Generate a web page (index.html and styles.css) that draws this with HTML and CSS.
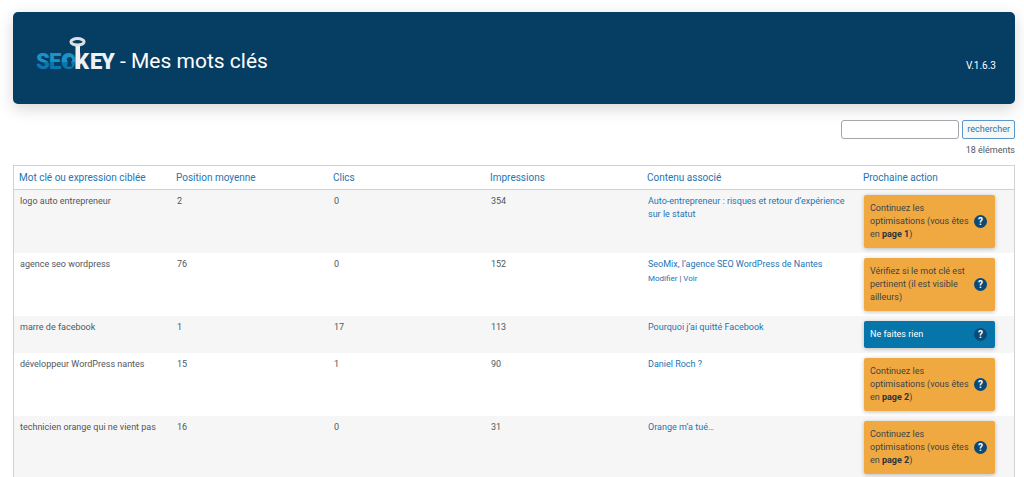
FILE: index.html
```html
<!DOCTYPE html>
<html lang="fr">
<head>
<meta charset="utf-8">
<meta name="viewport" content="width=device-width, initial-scale=1">
<title>SEOKEY - Mes mots clés</title>
<link rel="stylesheet" href="styles.css">
</head>
<body>
<header class="banner">
  <h1 class="banner-title">
    <svg class="logo" viewBox="0 0 80 36" role="img" aria-label="SEOKEY">
      <defs>
        <linearGradient id="duo" gradientUnits="userSpaceOnUse" x1="0" y1="16" x2="0" y2="33">
          <stop offset="0.55" stop-color="#1c93c8"/>
          <stop offset="0.55" stop-color="#0a78ae"/>
        </linearGradient>
      </defs>
      <g class="logo-letters">
        <g fill="url(#duo)" stroke="url(#duo)"><text x="0" y="32">S</text><text x="13" y="32">E</text><text x="25" y="32">O</text></g>
        <ellipse cx="33" cy="24.500" rx="5" ry="6" fill="url(#duo)"/>
        <path d="M33.500 20a2.700 2.700 0 0 1 1.600 4.900l1 4.600h-5.200l1-4.600a2.700 2.700 0 0 1 1.600-4.900z" fill="#063d63" stroke="none"/>
        <g fill="#f0f1f3" stroke="#f0f1f3"><text x="39" y="32">K</text><text x="54" y="32">E</text><text x="65" y="32">Y</text></g>
      </g>
      <path d="M39.500 7h4.500v25h-4.500z" fill="#f0f1f3"/>
      <ellipse cx="41.500" cy="4.800" rx="6.600" ry="3.200" fill="none" stroke="#dcdfe3" stroke-width="3"/>
    </svg>
    <span>- Mes mots clés</span>
  </h1>
  <span class="version">V.1.6.3</span>
</header>
<main class="content">
  <form class="search">
    <input class="search-field" type="search" aria-label="Rechercher un mot clé">
    <button class="search-button" type="button">rechercher</button>
  </form>
  <p class="count">18 éléments</p>
  <table class="keywords">
    <colgroup><col class="col-s"><col class="col-s"><col class="col-s"><col class="col-s"><col class="col-l"><col></colgroup>
    <thead>
      <tr>
        <th scope="col"><a href="#">Mot clé ou expression ciblée</a></th>
        <th scope="col"><a href="#">Position moyenne</a></th>
        <th scope="col"><a href="#">Clics</a></th>
        <th scope="col"><a href="#">Impressions</a></th>
        <th scope="col"><a href="#">Contenu associé</a></th>
        <th scope="col"><a href="#">Prochaine action</a></th>
      </tr>
    </thead>
    <tbody>
      <tr>
        <td>logo auto entrepreneur</td><td>2</td><td>0</td><td>354</td>
        <td><a href="#">Auto-entrepreneur : risques et retour d’expérience sur le statut</a></td>
        <td><div class="action"><span>Continuez les optimisations (vous êtes en <b>page 1</b>)</span><button class="help" type="button" aria-label="Aide">?</button></div></td>
      </tr>
      <tr>
        <td>agence seo wordpress</td><td>76</td><td>0</td><td>152</td>
        <td><a href="#">SeoMix, l’agence SEO WordPress de Nantes</a>
          <div class="row-links"><a href="#">Modifier</a> | <a href="#">Voir</a></div></td>
        <td><div class="action"><span>Vérifiez si le mot clé est pertinent (il est visible ailleurs)</span><button class="help" type="button" aria-label="Aide">?</button></div></td>
      </tr>
      <tr>
        <td>marre de facebook</td><td>1</td><td>17</td><td>113</td>
        <td><a href="#">Pourquoi j’ai quitté Facebook</a></td>
        <td><div class="action action-done"><span>Ne faites rien</span><button class="help" type="button" aria-label="Aide">?</button></div></td>
      </tr>
      <tr>
        <td>développeur WordPress nantes</td><td>15</td><td>1</td><td>90</td>
        <td><a href="#">Daniel Roch ?</a></td>
        <td><div class="action"><span>Continuez les optimisations (vous êtes en <b>page 2</b>)</span><button class="help" type="button" aria-label="Aide">?</button></div></td>
      </tr>
      <tr>
        <td>technicien orange qui ne vient pas</td><td>16</td><td>0</td><td>31</td>
        <td><a href="#">Orange m’a tué…</a></td>
        <td><div class="action"><span>Continuez les optimisations (vous êtes en <b>page 2</b>)</span><button class="help" type="button" aria-label="Aide">?</button></div></td>
      </tr>
    </tbody>
  </table>
</main>
</body>
</html>
```
FILE: styles.css
```css
* { box-sizing: border-box; }
body {
  margin: 0;
  padding: 12px 9px 0 13px;
  background: #fff;
  color: #50575e;
  font: 9px/13px Roboto, sans-serif;
}
a { color: #2574b3; text-decoration: none; }
.banner {
  display: flex;
  align-items: center;
  justify-content: space-between;
  padding: 25px 19px 31px 23px;
  border-radius: 5px;
  background: #063d63;
  color: #fff;
  box-shadow: 0 5px 16px rgba(0, 0, 0, 0.16);
}
.banner-title {
  display: flex;
  align-items: flex-end;
  gap: 4px;
  margin: 0;
  font-size: 21px;
  font-weight: 400;
  line-height: 24px;
}
.logo { width: 80px; height: 36px; overflow: visible; }
.logo-letters { font: 900 22px Roboto, sans-serif; stroke-width: 0; }
.version { padding-top: 20px; font-size: 10px; }
.search {
  display: flex;
  justify-content: flex-end;
  gap: 3px;
  margin-top: 16px;
}
.search-field {
  width: 118px;
  height: 19px;
  border: 1px solid #a3a6aa;
  border-radius: 3px;
  background: #fff;
  font: inherit;
}
.search-button {
  height: 19px;
  padding: 0 4px;
  border: 1px solid #5b97c8;
  border-radius: 2px;
  background: #f6f7f7;
  color: #2574b3;
  font: inherit;
}
.count { margin: 5px 0 8px; text-align: right; }
.keywords {
  width: 100%;
  table-layout: fixed;
  border: 1px solid #d0d1d3;
  border-spacing: 0;
}
.col-s { width: 15.7%; }
.col-l { width: 21.6%; }
.keywords th {
  padding: 5px;
  border-bottom: 1px solid #d0d1d3;
  font-size: 10px;
  font-weight: 400;
  text-align: left;
}
.keywords td { padding: 5px 6px; vertical-align: top; }
.keywords td:last-child { padding-right: 19px; }
.keywords tbody tr:nth-child(odd) { background: #f6f6f6; }
.row-links { margin-top: 1px; font-size: 8px; }
.action {
  display: flex;
  align-items: center;
  justify-content: space-between;
  gap: 2px;
  padding: 7px 8px 7px 6px;
  border-radius: 2px;
  background: #f0a941;
  color: #3c434a;
  box-shadow: 0 1px 4px rgba(0, 0, 0, 0.25);
}
.action b { font-weight: 700; color: #2c3338; }
.action-done { background: #0675aa; color: #fff; }
.help {
  flex: none;
  width: 13px;
  height: 13px;
  padding: 0;
  border: 0;
  border-radius: 50%;
  background: #0b4a78;
  color: #fff;
  font: 700 10px/13px Roboto, sans-serif;
}
```
